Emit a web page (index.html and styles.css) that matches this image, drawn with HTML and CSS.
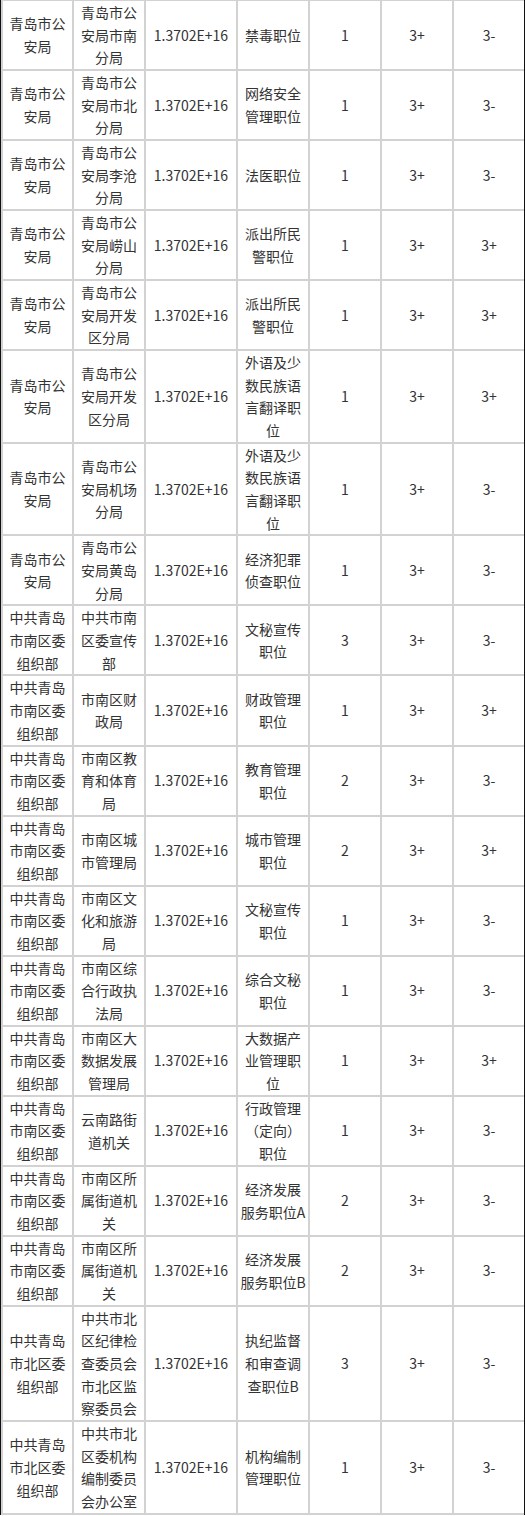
FILE: index.html
```html
<!DOCTYPE html>
<html lang="zh-CN">
<head>
<meta charset="utf-8">
<title>职位表</title>
<link rel="stylesheet" href="styles.css">
</head>
<body>
<div class="frame">
<table class="jobs">
<colgroup>
<col class="c-org"><col class="c-unit"><col class="c-code"><col class="c-post"><col class="c-num"><col class="c-a"><col class="c-b">
</colgroup>
<tbody>
<tr><td>青岛市公安局</td><td>青岛市公安局市南分局</td><td>1.3702E+16</td><td>禁毒职位</td><td>1</td><td>3+</td><td>3-</td></tr>
<tr><td>青岛市公安局</td><td>青岛市公安局市北分局</td><td>1.3702E+16</td><td>网络安全管理职位</td><td>1</td><td>3+</td><td>3-</td></tr>
<tr><td>青岛市公安局</td><td>青岛市公安局李沧分局</td><td>1.3702E+16</td><td>法医职位</td><td>1</td><td>3+</td><td>3-</td></tr>
<tr><td>青岛市公安局</td><td>青岛市公安局崂山分局</td><td>1.3702E+16</td><td>派出所民警职位</td><td>1</td><td>3+</td><td>3+</td></tr>
<tr><td>青岛市公安局</td><td>青岛市公安局开发区分局</td><td>1.3702E+16</td><td>派出所民警职位</td><td>1</td><td>3+</td><td>3+</td></tr>
<tr><td>青岛市公安局</td><td>青岛市公安局开发区分局</td><td>1.3702E+16</td><td>外语及少数民族语言翻译职位</td><td>1</td><td>3+</td><td>3+</td></tr>
<tr><td>青岛市公安局</td><td>青岛市公安局机场分局</td><td>1.3702E+16</td><td>外语及少数民族语言翻译职位</td><td>1</td><td>3+</td><td>3-</td></tr>
<tr><td>青岛市公安局</td><td>青岛市公安局黄岛分局</td><td>1.3702E+16</td><td>经济犯罪侦查职位</td><td>1</td><td>3+</td><td>3-</td></tr>
<tr><td>中共青岛市南区委组织部</td><td>中共市南区委宣传部</td><td>1.3702E+16</td><td>文秘宣传职位</td><td>3</td><td>3+</td><td>3-</td></tr>
<tr><td>中共青岛市南区委组织部</td><td>市南区财政局</td><td>1.3702E+16</td><td>财政管理职位</td><td>1</td><td>3+</td><td>3+</td></tr>
<tr><td>中共青岛市南区委组织部</td><td>市南区教育和体育局</td><td>1.3702E+16</td><td>教育管理职位</td><td>2</td><td>3+</td><td>3-</td></tr>
<tr><td>中共青岛市南区委组织部</td><td>市南区城市管理局</td><td>1.3702E+16</td><td>城市管理职位</td><td>2</td><td>3+</td><td>3+</td></tr>
<tr><td>中共青岛市南区委组织部</td><td>市南区文化和旅游局</td><td>1.3702E+16</td><td>文秘宣传职位</td><td>1</td><td>3+</td><td>3-</td></tr>
<tr><td>中共青岛市南区委组织部</td><td>市南区综合行政执法局</td><td>1.3702E+16</td><td>综合文秘职位</td><td>1</td><td>3+</td><td>3-</td></tr>
<tr><td>中共青岛市南区委组织部</td><td>市南区大数据发展管理局</td><td>1.3702E+16</td><td>大数据产业管理职位</td><td>1</td><td>3+</td><td>3+</td></tr>
<tr><td>中共青岛市南区委组织部</td><td>云南路街道机关</td><td>1.3702E+16</td><td>行政管理（定向）职位</td><td>1</td><td>3+</td><td>3-</td></tr>
<tr><td>中共青岛市南区委组织部</td><td>市南区所属街道机关</td><td>1.3702E+16</td><td>经济发展服务职位A</td><td>2</td><td>3+</td><td>3-</td></tr>
<tr><td>中共青岛市南区委组织部</td><td>市南区所属街道机关</td><td>1.3702E+16</td><td>经济发展服务职位B</td><td>2</td><td>3+</td><td>3-</td></tr>
<tr><td>中共青岛市北区委组织部</td><td>中共市北区纪律检查委员会市北区监察委员会</td><td>1.3702E+16</td><td>执纪监督和审查调查职位B</td><td>3</td><td>3+</td><td>3-</td></tr>
<tr><td>中共青岛市北区委组织部</td><td>中共市北区委机构编制委员会办公室</td><td>1.3702E+16</td><td>机构编制管理职位</td><td>1</td><td>3+</td><td>3-</td></tr>
</tbody>
</table>
</div>
</body>
</html>
```

FILE: styles.css
```css
html, body {
  margin: 0;
  padding: 0;
  background: #fff;
}

.frame {
  width: 523px;
  border-left: 1px solid #111;
  border-right: 1px solid #111;
  overflow: hidden;
}

.jobs {
  width: 523px;
  table-layout: fixed;
  border-collapse: collapse;
  margin-top: -1px;
  font-family: "Noto Sans CJK SC", "Noto Sans", sans-serif;
  font-size: 14px;
  color: #333;
}

.c-org { width: 71px; }
.c-unit { width: 72px; }
.c-code { width: 92px; }
.c-post { width: 72px; }
.c-num { width: 72px; }
.c-a { width: 72px; }
.c-b { width: 72px; }

.jobs td {
  border: 2px solid #d2d2d2;
  padding: 0 1px;
  line-height: 22.67px;
  text-align: center;
  vertical-align: middle;
  word-break: break-all;
  text-spacing-trim: space-all;
}
```
